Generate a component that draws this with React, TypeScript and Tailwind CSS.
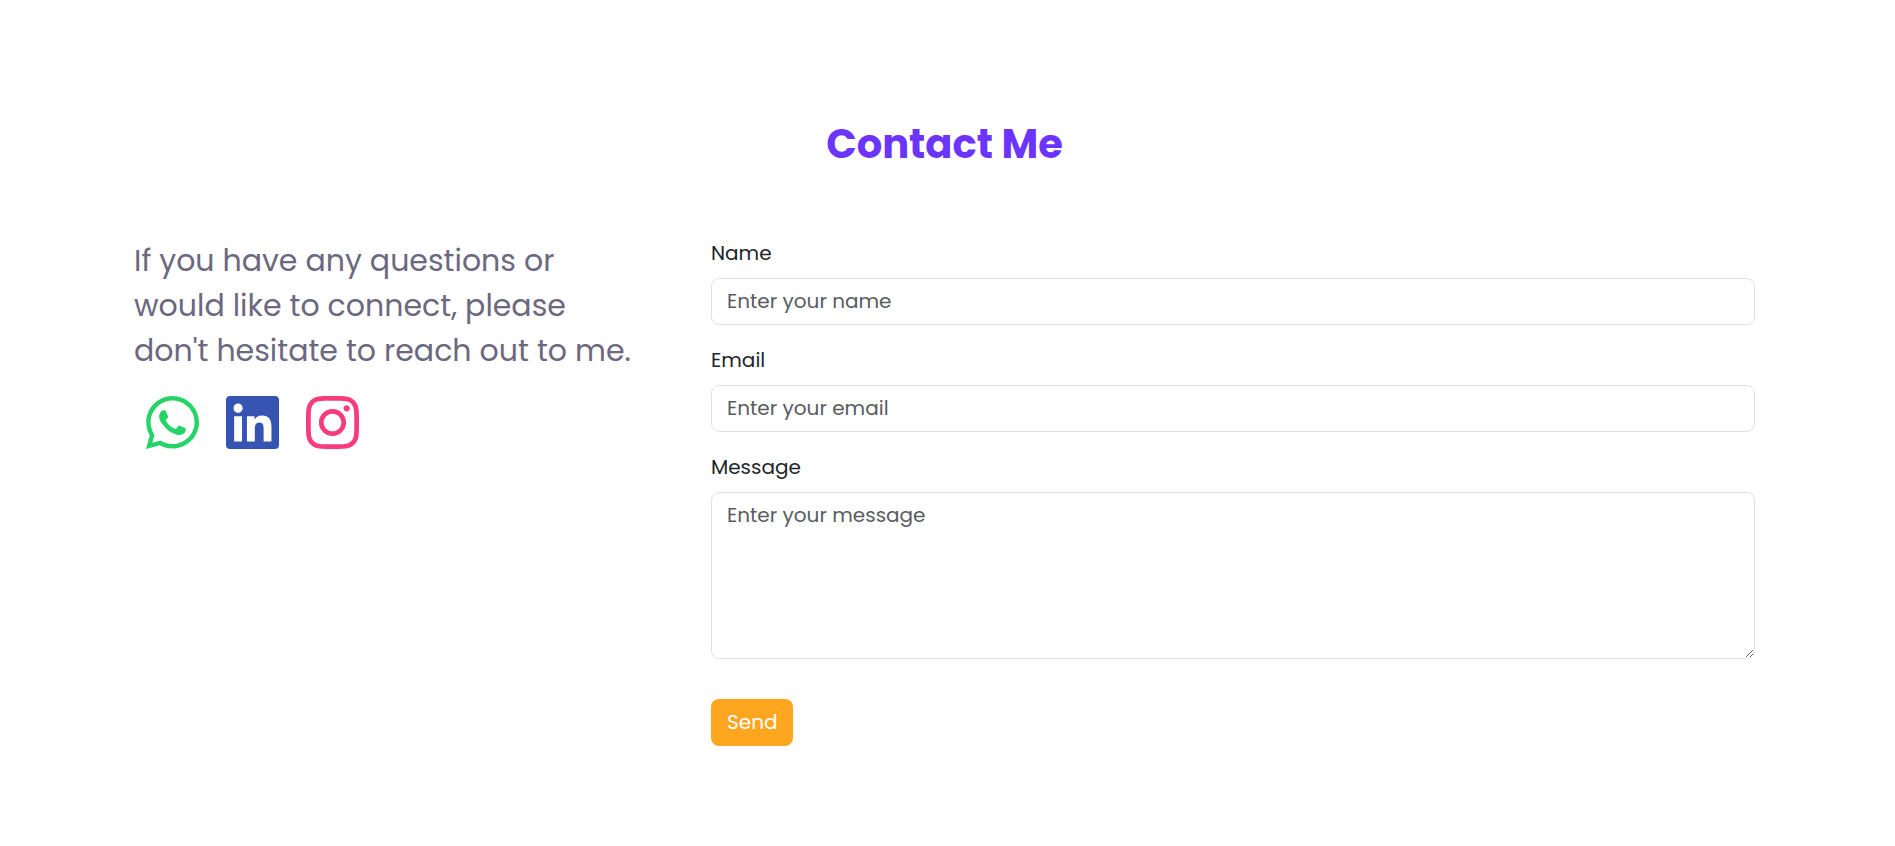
import React from "react";
import { FaInstagram, FaLinkedin, FaWhatsapp } from "react-icons/fa";

const control =
  "block w-full rounded-lg border border-[#dee2e6] bg-white px-[15px] py-2 text-[20px] leading-[29px] text-[#212529] placeholder:text-[#595c5f] placeholder:opacity-100 focus:border-[#6c35ff] focus:outline-none";
const label = "mb-[10px] block text-[20px] leading-[30px]";

export default function App() {
  return (
    <main className="min-h-screen bg-white pt-28 pr-[140px] pb-24 pl-[134px] font-[Poppins,Inter,sans-serif] text-[#212529]">
      <h1 className="text-center text-[40px] leading-[64px] font-bold text-[#6c35ff]">Contact Me</h1>
      <div className="mt-[62px] grid grid-cols-[577fr_1044fr]">
        <section>
          <p className="max-w-[510px] text-[30px] leading-[45px] text-[#6b6880]">
            If you have any questions or would like to connect, please don't hesitate to reach out to me.
          </p>
          <div className="mt-[19px] ml-3 flex gap-[27px]">
            <a href="#whatsapp" aria-label="WhatsApp">
              <FaWhatsapp className="h-[61px] w-[53px] text-[#25d366]" />
            </a>
            <a href="#linkedin" aria-label="LinkedIn">
              <FaLinkedin className="h-[61px] w-[53px] text-[#3655b3]" />
            </a>
            <a href="#instagram" aria-label="Instagram">
              <FaInstagram className="h-[61px] w-[53px] text-[#f73c7e]" />
            </a>
          </div>
        </section>
        <form onSubmit={(event) => event.preventDefault()}>
          <div className="mb-5">
            <label htmlFor="name" className={label}>Name</label>
            <input id="name" type="text" placeholder="Enter your name" className={control} />
          </div>
          <div className="mb-5">
            <label htmlFor="email" className={label}>Email</label>
            <input id="email" type="email" placeholder="Enter your email" className={control} />
          </div>
          <div className="mb-10">
            <label htmlFor="message" className={label}>Message</label>
            <textarea id="message" placeholder="Enter your message" className={control + " h-[167px] resize-y"} />
          </div>
          <button type="submit" className="rounded-lg bg-[#ffa620] px-4 py-2 text-[20px] leading-[31px] text-white">
            Send
          </button>
        </form>
      </div>
    </main>
  );
}
